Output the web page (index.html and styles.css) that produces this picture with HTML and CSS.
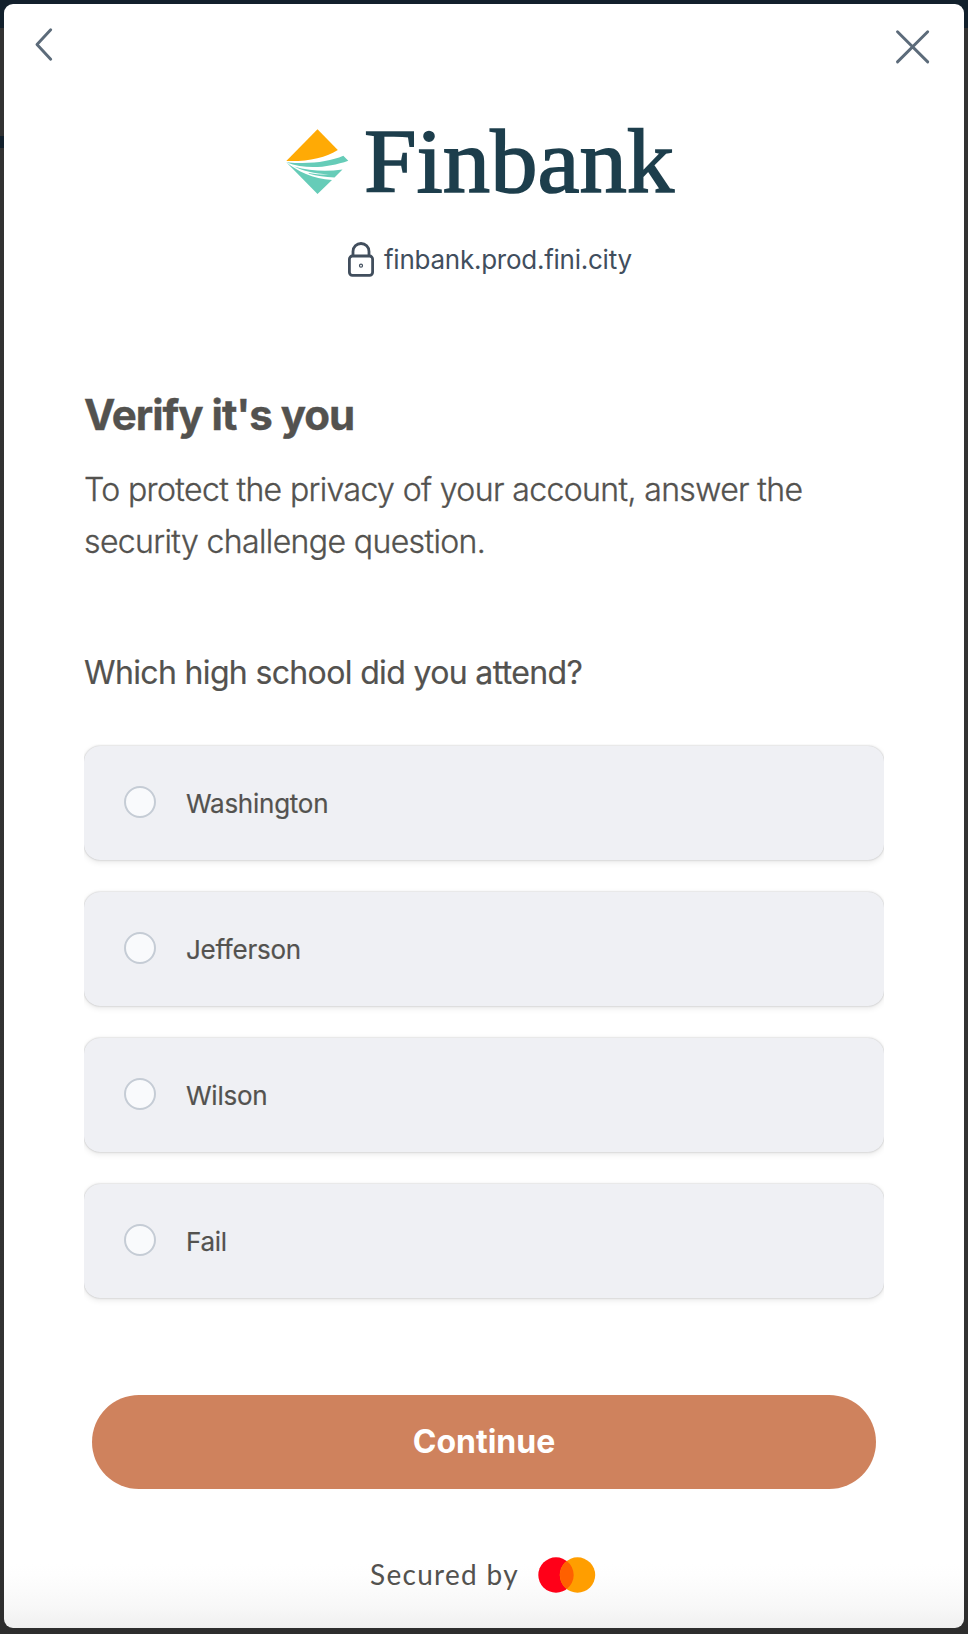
FILE: index.html
```html
<!DOCTYPE html>
<html lang="en">
<head>
<meta charset="utf-8">
<title>Verify it's you</title>
<link rel="stylesheet" href="styles.css">
</head>
<body>
<main class="modal">
  <header class="toolbar">
    <button class="icon-button" aria-label="Back"><svg width="20" height="36" viewBox="0 0 20 36"><path d="M16.700 2.700 3 17.400l13.700 14.800"/></svg></button>
    <button class="icon-button" aria-label="Close"><svg width="36" height="36" viewBox="0 0 36 36"><path d="m2.500 2.700 30.200 30.200M32.700 2.700 2.500 32.900"/></svg></button>
  </header>
  <div class="brand">
    <svg class="brand-logo" width="400" height="80" viewBox="0 0 400 80">
      <path fill="#ffaa05" d="M31.500 9.300 51.800 30C40 38 20 41.800 .3 41Z"/>
      <path fill="#66ccb8" d="M.3 42.200C23 44.500 43 42 57.300 35.800L62.300 40.700C43 47.500 20 50 .3 42.200Z"/>
      <path fill="#66ccb8" d="M8 46.500C24 51 40 52 56.500 49.500L48.500 57.500C39 57 31 56 23 53.800L22.500 53C33 55 38 54.500 43 54.500C28 53.500 17 51 8 46.500Z"/>
      <path fill="#66ccb8" d="M.3 42.200C11 51 27 59 46 60L31.500 74Z"/>
      <text class="wordmark" x="78" y="71.500" textLength="310" lengthAdjust="spacingAndGlyphs">Finbank</text>
    </svg>
    <div class="site">
      <svg class="lock" width="26" height="35" viewBox="0 0 26 35"><path d="M5 14V9.500a8 8 0 0 1 16 0V14"/><rect x="1.400" y="14" width="23.200" height="19.300" rx="3"/><circle cx="13" cy="23.700" r="1.500"/></svg>
      <span>finbank.prod.fini.city</span>
    </div>
  </div>
  <section class="challenge">
    <h1>Verify it's you</h1>
    <p class="lead">To protect the privacy of your account, answer the<br>security challenge question.</p>
    <h2>Which high school did you attend?</h2>
    <div class="options">
      <label class="option"><span class="radio"></span><span class="answer">Washington</span></label>
      <label class="option"><span class="radio"></span><span class="answer">Jefferson</span></label>
      <label class="option"><span class="radio"></span><span class="answer">Wilson</span></label>
      <label class="option"><span class="radio"></span><span class="answer">Fail</span></label>
    </div>
  </section>
  <button class="continue">Continue</button>
  <footer class="secured">
    <span>Secured by</span>
    <svg width="58" height="36" viewBox="0 0 58 36"><circle cx="18" cy="18" r="17.700" fill="#ff0018"/><circle cx="39.500" cy="18" r="17.700" fill="#ff9e00"/><path fill="#ff6000" d="M28.750 3.940a17.700 17.700 0 0 1 0 28.120 17.700 17.700 0 0 1 0-28.120Z"/></svg>
  </footer>
</main>
</body>
</html>
```
FILE: styles.css
```css
* { box-sizing: border-box; }
body {
  margin: 0;
  height: 1634px;
  padding: 4px 4px 6px;
  background:
    linear-gradient(#12202c, #12202c) 0 136px / 4px 12px no-repeat,
    linear-gradient(#12202c 28px, #323232 28px, #333 1500px, #2d2d2d);
  font-family: Inter, "Liberation Sans", sans-serif;
  color: #53524f;
}
button { border: 0; padding: 0; font: inherit; }
svg { display: block; flex: none; overflow: visible; }
.modal {
  height: 1624px;
  border-radius: 9px;
  background: linear-gradient(#fff 1560px, #fefefe 1570px, #f8f8f8 1602px, #f0f0f0 1624px);
}
.toolbar {
  height: 105px;
  padding: 23px 33px 0 30px;
  display: flex;
  justify-content: space-between;
  align-items: flex-start;
}
.icon-button { background: none; }
.icon-button path { fill: none; stroke: #5c6b7a; stroke-width: 2.900; stroke-linecap: round; stroke-linejoin: round; }
.icon-button[aria-label="Close"] { padding-top: 2px; }
.brand {
  height: 281px;
  padding: 11px 0 0 282px;
}
.wordmark { font: 92px/1 "Liberation Serif", serif; fill: #1d3e4c; stroke: #1d3e4c; stroke-width: 1.600px; }
.site {
  display: flex;
  align-items: center;
  gap: 10px;
  margin: 41px 0 0 62px;
  color: #414e5d;
  font-size: 26px;
  line-height: 36px;
  letter-spacing: -.25px;
}
.site span { padding-top: 2px; line-height: 34px; }
.lock { fill: none; stroke: #414e5d; stroke-width: 2.800; }
.lock circle { stroke-width: 1.200; }
.challenge { padding: 0 80px; }
h1 { margin: 0; font-size: 42px; line-height: 50px; font-weight: 700; letter-spacing: -1px; -webkit-text-stroke: .4px; }
.lead { margin: 24px 0 0; font-size: 32px; line-height: 52px; font-weight: 300; letter-spacing: -.62px; white-space: nowrap; -webkit-text-stroke: .35px; }
h2 { margin: 79px 0 0; font-size: 32px; line-height: 52px; font-weight: 400; letter-spacing: -.65px; -webkit-text-stroke: .2px; }
.options { display: grid; gap: 32px; margin-top: 45px; padding: 2px 0 10px; overflow: hidden; }
.option {
  height: 114px;
  border-radius: 16px;
  padding: 0 0 1px 40px;
  display: flex;
  align-items: center;
  gap: 30px;
  background: #eff0f4;
  box-shadow: 0 0 2px rgba(0,0,0,.25), 0 2px 6px rgba(0,0,0,.1);
  font-size: 26px;
  letter-spacing: -.25px;
}
.answer { padding-top: 2px; -webkit-text-stroke: .2px; }
.radio { width: 32px; height: 32px; margin-top: -1px; border: 2px solid #c5ccd5; border-radius: 50%; background: #f9fafc; }
.continue {
  display: block;
  width: 784px;
  height: 94px;
  margin: 87px auto 0;
  padding-bottom: 2px;
  border-radius: 47px;
  background: #cf825d;
  color: #fff;
  font-size: 32px;
  font-weight: 700;
}
.secured {
  display: flex;
  align-items: center;
  gap: 19px;
  margin: 68px 0 0 366px;
  font: 28px/36px Lato, sans-serif;
  letter-spacing: 1.300px;
}
.secured span { padding-bottom: 1px; line-height: 35px; }
```
